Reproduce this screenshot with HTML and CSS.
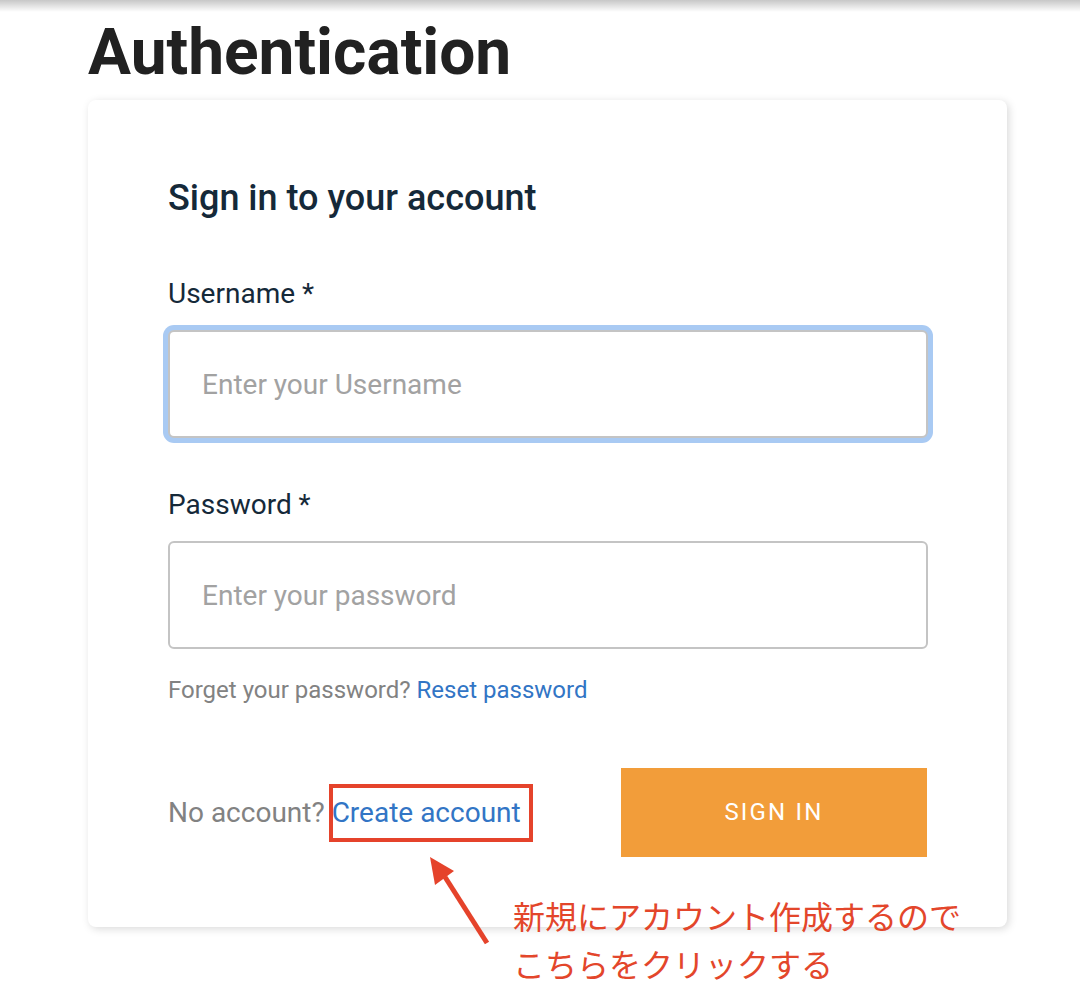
FILE: index.html
```html
<!DOCTYPE html>
<html lang="en">
<head>
<meta charset="utf-8">
<title>Authentication</title>
<link rel="stylesheet" href="styles.css">
</head>
<body>
<div class="top-shadow"></div>
<main class="page">
  <h1 class="page-title">Authentication</h1>
  <section class="card">
    <h2 class="card-header">Sign in to your account</h2>
    <div class="field">
      <label class="field-label" for="username">Username *</label>
      <input class="field-input is-focused" id="username" type="text" placeholder="Enter your Username">
    </div>
    <div class="field">
      <label class="field-label" for="password">Password *</label>
      <input class="field-input" id="password" type="password" placeholder="Enter your password">
      <div class="hint">Forget your password? <a class="link" href="#">Reset password</a></div>
    </div>
    <div class="card-footer">
      <span class="footer-secondary">No account? <a class="link" href="#">Create account</a></span>
      <button class="primary-btn" type="button">Sign in</button>
    </div>
  </section>
</main>

<div class="note-box"></div>
<svg class="note-arrow" width="80" height="100" viewBox="0 0 80 100">
  <line x1="60" y1="88" x2="18" y2="22" stroke="#e5432b" stroke-width="5"/>
  <polygon points="3,2 27,16 8,30" fill="#e5432b"/>
</svg>
<div class="note-text">新規にアカウント作成するので<br>こちらをクリックする</div>
</body>
</html>
```

FILE: styles.css
```css
html, body {
  margin: 0;
  padding: 0;
  background: #ffffff;
}

body {
  font-family: Roboto, "Noto Sans", "Liberation Sans", sans-serif;
  color: #152939;
  position: relative;
  width: 1080px;
  height: 1002px;
  overflow: hidden;
}

.top-shadow {
  position: absolute;
  left: 0;
  top: 0;
  width: 100%;
  height: 12px;
  background: linear-gradient(to bottom, rgba(0, 0, 0, 0.22), rgba(0, 0, 0, 0));
}

.page {
  padding: 21px 0 0 88px;
}

.page-title {
  margin: 0 0 15px 0;
  font-size: 64px;
  line-height: 64px;
  font-weight: 700;
  color: #212121;
  letter-spacing: 0;
}

.card {
  box-sizing: border-box;
  width: 919px;
  padding: 77px 80px 70px 80px;
  background: #fff;
  border-radius: 8px;
  box-shadow: 2px 2px 8px rgba(0, 0, 0, 0.15);
}

.card-header {
  margin: 0 0 58px 0;
  font-size: 36px;
  font-weight: 500;
  line-height: normal;
  color: #152939;
}

.field {
  display: flex;
  flex-direction: column;
}

.field + .field {
  margin-top: 50px;
}

.field-label {
  font-size: 28px;
  line-height: normal;
  color: #152939;
  margin-bottom: 20px;
}

.field-input {
  box-sizing: border-box;
  width: 760px;
  height: 108px;
  padding: 0 32px;
  font-family: Roboto, "Noto Sans", sans-serif;
  font-size: 28px;
  color: #152939;
  border: 2px solid #c4c4c4;
  border-radius: 6px;
  background: #fff;
  outline: none;
}

.field-input::placeholder {
  color: #a2a2a2;
}

.field-input.is-focused {
  box-shadow: 0 0 0 5px #a9caf3;
}

.hint {
  margin-top: 27px;
  font-size: 24px;
  line-height: normal;
  color: #828282;
}

.link {
  color: #3275c5;
  text-decoration: none;
}

.card-footer {
  margin-top: 64px;
  display: flex;
  align-items: center;
  justify-content: space-between;
}

.footer-secondary {
  font-size: 28px;
  color: #828282;
}

.primary-btn {
  width: 306px;
  padding: 28px 0;
  font-family: Roboto, "Noto Sans", sans-serif;
  font-size: 24px;
  line-height: 33px;
  letter-spacing: 2.2px;
  text-transform: uppercase;
  color: #fff;
  background: #f29d3a;
  border: none;
  border-radius: 0;
}

.note-box {
  position: absolute;
  left: 329px;
  top: 784px;
  width: 196px;
  height: 50px;
  border: 4px solid #e5432b;
}

.note-arrow {
  position: absolute;
  left: 427px;
  top: 855px;
}

.note-text {
  position: absolute;
  left: 513px;
  top: 891px;
  font-family: "Noto Sans CJK JP", "Noto Sans", sans-serif;
  font-size: 32px;
  line-height: 48px;
  color: #e3462b;
  white-space: nowrap;
}
```
